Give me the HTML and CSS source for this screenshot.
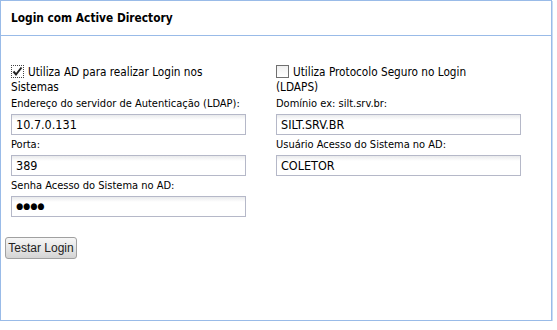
FILE: index.html
```html
<!DOCTYPE html>
<html>
<head>
<meta charset="utf-8">
<link rel="stylesheet" href="styles.css">
</head>
<body>
<div class="panel">
  <div class="header">Login com Active Directory</div>
  <div class="body">
    <div class="cols">
      <div class="col">
        <div class="check"><span class="box focus"><svg width="11" height="11" viewBox="0 0 11 11"><path d="M1.5 5.5 L4 8.5 L9.5 1.5" fill="none" stroke="#222" stroke-width="2"/></svg></span>Utiliza AD para realizar Login nos Sistemas</div>
        <div class="label">Endereço do servidor de Autenticação (LDAP):</div>
        <div class="input w1">10.7.0.131</div>
        <div class="label">Porta:</div>
        <div class="input w1">389</div>
        <div class="label">Senha Acesso do Sistema no AD:</div>
        <div class="input w1 pwd">●●●●</div>
      </div>
      <div class="col">
        <div class="check"><span class="box"></span>Utiliza Protocolo Seguro no Login (LDAPS)</div>
        <div class="label">Domínio ex: silt.srv.br:</div>
        <div class="input w2">SILT.SRV.BR</div>
        <div class="label">Usuário Acesso do Sistema no AD:</div>
        <div class="input w2">COLETOR</div>
      </div>
    </div>
    <button class="btn">Testar Login</button>
  </div>
</div>
</body>
</html>
```
FILE: styles.css
```css
html, body { margin: 0; padding: 0; background: #fff; }
body { font-family: "DejaVu Sans Condensed", "DejaVu Sans", sans-serif; color: #000; }
.panel {
  width: 550px;
  height: 319px;
  border: 1px solid #99bbe8;
  box-shadow: 1px 1px 0 #c9dbf3;
  display: flex;
  flex-direction: column;
}
.header {
  height: 34px;
  border-bottom: 1px solid #99bbe8;
  display: flex;
  align-items: center;
  padding-left: 10px;
  font-weight: bold;
  font-size: 11.8px;
}
.body { padding: 29px 0 0 4px; }
.cols { display: flex; gap: 10px; padding-left: 6px; }
.col { width: 255px; display: flex; flex-direction: column; align-items: flex-start; }
.check { width: 230px; font-size: 11.7px; line-height: 15px; }
.box {
  display: inline-block;
  width: 11px; height: 11px;
  border: 1px solid #707070;
  background: linear-gradient(#f0f0f0, #fff);
  vertical-align: -2px;
  margin-right: 4px;
}
.box.focus { border: 1px dotted #444; background: #fff; }
.box svg { display: block; }
.label { font-size: 11px; line-height: 16px; margin: 1px 0 2px; }
.input {
  box-sizing: border-box;
  height: 21px;
  border: 1px solid #b5b8c8;
  background: linear-gradient(#e9eaec, #fff 5px);
  font-size: 12.5px;
  line-height: 19px;
  padding-left: 4px;
  margin-bottom: 1px;
}
.w1 { width: 235px; }
.w2 { width: 245px; }
.pwd { font-size: 9px; }
.btn {
  margin-top: 19px;
  width: 72px; height: 22px;
  border: 1px solid #a0a0a0;
  border-radius: 3px;
  background: linear-gradient(#f6f6f6, #e3e3e3 60%, #d4d4d4);
  font-family: "Liberation Sans", Arial, sans-serif;
  font-size: 12px;
  color: #222;
  padding: 0;
}
```
